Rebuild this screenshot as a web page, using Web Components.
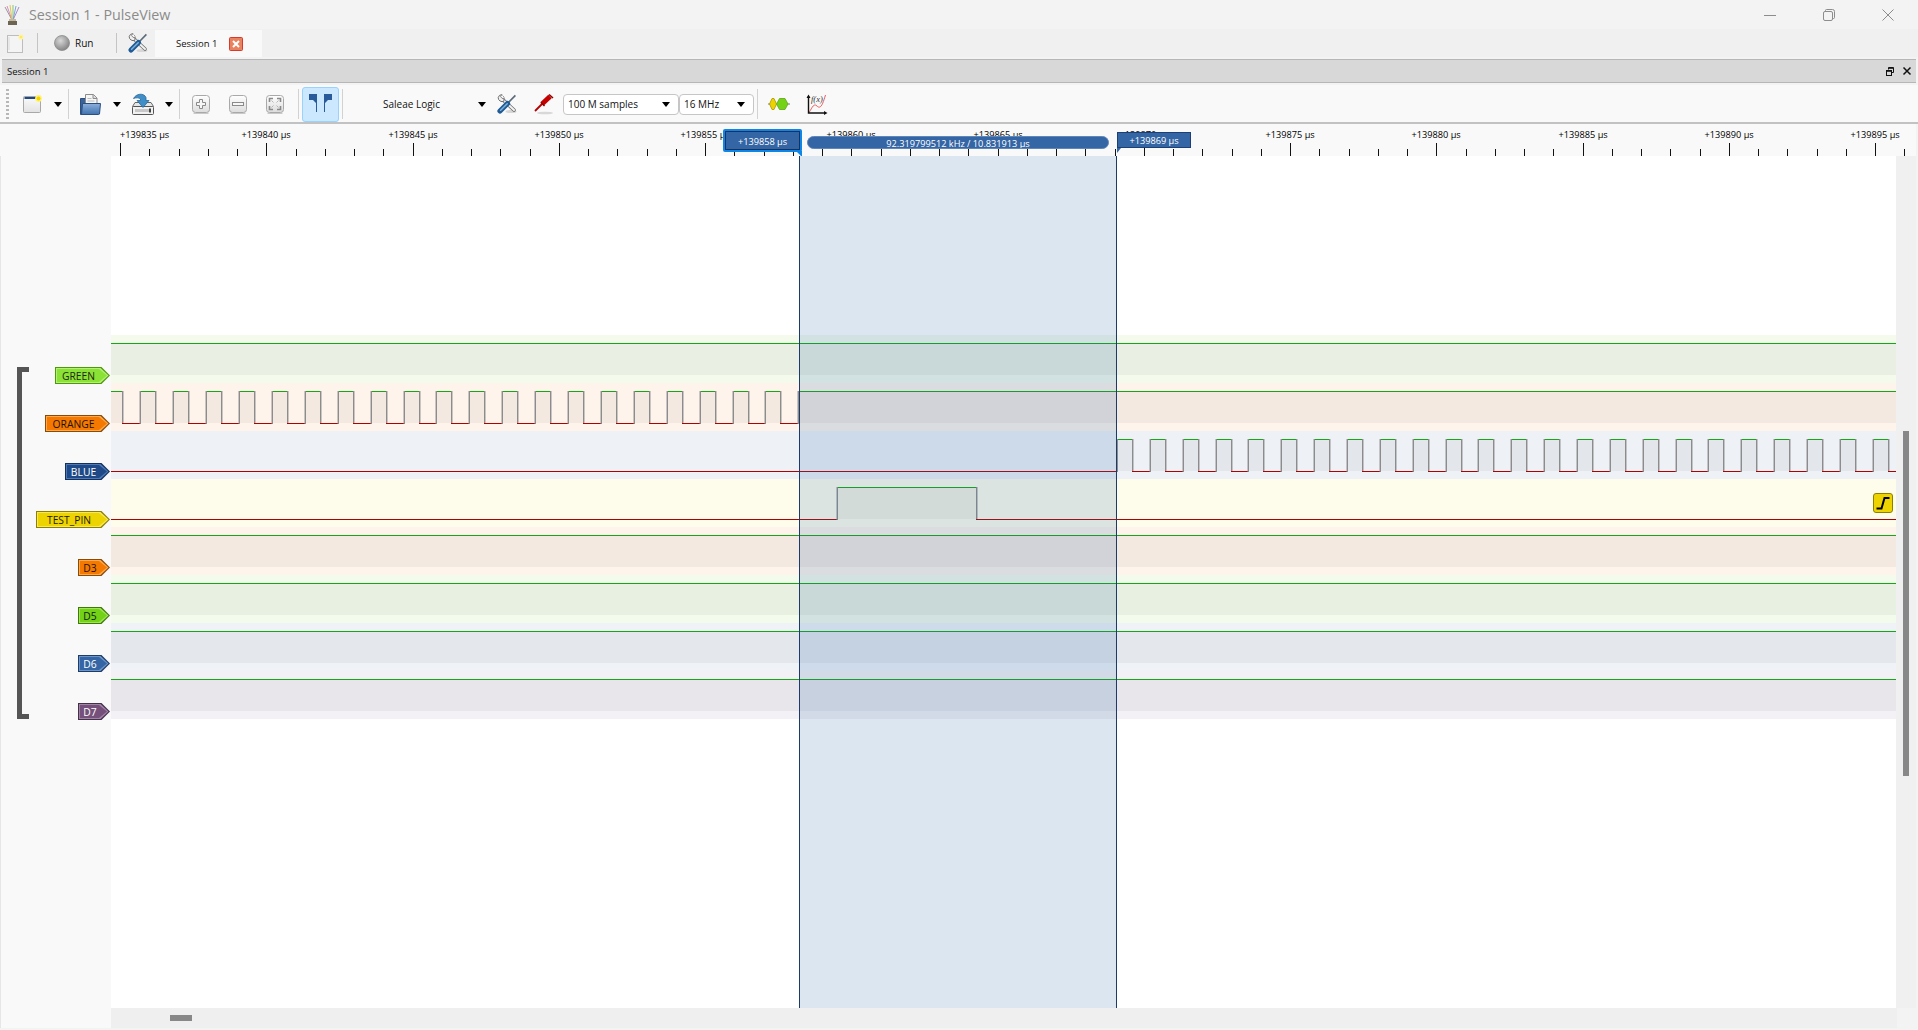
<!DOCTYPE html>
<html>
<head>
<meta charset="utf-8">
<title>Session 1 - PulseView</title>
<style>
  html, body { margin: 0; padding: 0; background: #f3f3f3; overflow: hidden; }
  body { width: 1918px; height: 1030px; font-family: "Open Sans", "Liberation Sans", sans-serif; }
</style>
</head>
<body>
<pv-window>
  <pv-titlebar>Session 1 - PulseView</pv-titlebar>
  <pv-tabbar></pv-tabbar>
  <pv-dockhead>Session 1</pv-dockhead>
  <pv-toolbar></pv-toolbar>
  <pv-ruler></pv-ruler>
  <pv-view>
    <pv-trace tone="lime" wide="55" high="111-1896">GREEN</pv-trace>
    <pv-trace tone="orange" wide="65" pulses="107.4 32.9 15 21" high="798-1896">ORANGE</pv-trace>
    <pv-trace tone="navy" wide="45" pulses="1117 32.857 15 24">BLUE</pv-trace>
    <pv-trace tone="yellow" wide="74" high="837-976">TEST_PIN<pv-trigger slot="marker"></pv-trigger></pv-trace>
    <pv-trace tone="orange" wide="32" high="111-1896">D3</pv-trace>
    <pv-trace tone="green" wide="32" high="111-1896">D5</pv-trace>
    <pv-trace tone="blue" wide="32" high="111-1896">D6</pv-trace>
    <pv-trace tone="plum" wide="32" high="111-1896">D7</pv-trace>
  </pv-view>
  <pv-hscroll></pv-hscroll>
</pv-window>

<script>
const ICONS = {
  logo: `<svg width="17" height="20" viewBox="0 0 17 20"><g fill="none" stroke-width="1"><path d="M8 15L1 2" stroke="#9a9a9a"/><path d="M8 15L3 1" stroke="#d88cc0"/><path d="M8 15L6 0" stroke="#e2c64a"/><path d="M9 15L9 0" stroke="#8fc66b"/><path d="M9 15L12 1" stroke="#7aa6d8"/><path d="M9 15L15 2" stroke="#a58ac8"/></g><rect x="5" y="14" width="7" height="2" fill="#c2b9a0"/><rect x="4" y="16" width="9" height="4" fill="#6d6552"/></svg>`,
  page: `<svg width="17" height="19" viewBox="0 0 17 19"><rect x="0.5" y="1.5" width="15" height="17" fill="#f4f4f4" stroke="#bdbdbd"/><path d="M2 3v13" stroke="#dcdcdc"/><circle cx="14" cy="3" r="2.6" fill="#fff3a0"/><circle cx="14" cy="3" r="1.3" fill="#ffe95a"/></svg>`,
  run: `<svg width="16" height="16" viewBox="0 0 16 16"><defs><radialGradient id="r" cx="40%" cy="35%" r="70%"><stop offset="0" stop-color="#d8d8d8"/><stop offset="1" stop-color="#7f7f7f"/></radialGradient></defs><circle cx="8" cy="8" r="7.5" fill="url(#r)" stroke="#8a8a8a" stroke-width="0.8"/></svg>`,
  tools: `<svg width="20" height="20" viewBox="0 0 20 20"><ellipse cx="14" cy="17.5" rx="5.5" ry="1.6" fill="#d6d6d6"/><path d="M4 4L17 16" stroke="#6f6f6f" stroke-width="3.6" stroke-linecap="round"/><path d="M4 4L17 16" stroke="#f2f2f2" stroke-width="2" stroke-linecap="round"/><path d="M1.2 3.6A4 4 0 0 0 7 7.2L6.8 3 4.6 .6A4 4 0 0 0 1.2 3.6Z" fill="#f0f0f0" stroke="#6f6f6f" stroke-width="1"/><path d="M5 .4L3.6 2.5 5 4.4 7.4 4.4" fill="#f9f9f9" stroke="#6f6f6f" stroke-width=".8"/><path d="M18.4 1.4L11 9" stroke="#5a6a7a" stroke-width="1.6"/><path d="M10.5 9.5L3 17" stroke="#1f5b94" stroke-width="5.2" stroke-linecap="round"/><path d="M10.2 9.8L3.6 16.2" stroke="#7fb0da" stroke-width="1.6" stroke-linecap="round"/></svg>`,
  new: `<svg width="18" height="18" viewBox="0 0 18 18"><defs><linearGradient id="n" x1="0" y1="0" x2="0" y2="1"><stop offset="0" stop-color="#fbfbfb"/><stop offset="1" stop-color="#e2e2e2"/></linearGradient></defs><rect x="0.5" y="1.5" width="17" height="16" rx="1" fill="url(#n)" stroke="#a8a8a8"/><rect x="1.5" y="2" width="14" height="2" fill="#204a87"/><circle cx="15.5" cy="3.5" r="3.4" fill="#fff27a"/><circle cx="15.5" cy="3.5" r="2" fill="#f4d400"/></svg>`,
  open: `<svg width="21" height="21" viewBox="0 0 21 21"><defs><linearGradient id="o" x1="0" y1="0" x2="0" y2="1"><stop offset="0" stop-color="#8db0dc"/><stop offset="1" stop-color="#3f72af"/></linearGradient></defs><path d="M.5 4.5h5v16h-5z" fill="#3a639a" stroke="#2a4f82"/><path d="M5.5 .5h8l3.5 3.5v8h-11.500z" fill="#f6f6f6" stroke="#8c8c8c"/><path d="M13 .8v3.700h4" fill="#ddd" stroke="#8c8c8c"/><path d="M7.500 4.500h4M7.500 7h7" stroke="#bbb"/><path d="M2.500 9.500h18l-1 10.500a1 1 0 0 1-1 .500h-17z" fill="url(#o)" stroke="#2a4f82"/></svg>`,
  save: `<svg width="22" height="22" viewBox="0 0 22 22"><path d="M3 9.500h16l2.500 4h-21z" fill="#e6e6e6" stroke="#666"/><rect x="0.500" y="13.500" width="21" height="8" rx="1" fill="#f2f2f2" stroke="#555"/><rect x="3" y="16" width="14" height="3" fill="#c8c8c8"/><rect x="17" y="15.500" width="2" height="4" fill="#444"/><path d="M1.500 5.500C4 .5 12 -.5 14 4.500V7.500H17L11 14.500 5 7.500H8.500V6C7 4.500 4 4.500 1.500 5.500Z" fill="#3f8ec8" stroke="#2a6a9a" stroke-width=".8"/></svg>`,
  zoomin: `<svg width="18" height="19" viewBox="0 0 18 19"><defs><linearGradient id="z" x1="0" y1="0" x2="0" y2="1"><stop offset="0" stop-color="#fff"/><stop offset="1" stop-color="#dcdcdc"/></linearGradient></defs><rect x="0.500" y="0.500" width="17" height="17" rx="3" fill="url(#z)" stroke="#a9a9a9"/><path d="M1.500 18.500h15" stroke="#c9c9c9"/><path d="M7.500 4.500h3v3h3v3h-3v3h-3v-3h-3v-3h3z" fill="#f6f6f6" stroke="#8a8a8a"/></svg>`,
  zoomout: `<svg width="18" height="19" viewBox="0 0 18 19"><defs><linearGradient id="z" x1="0" y1="0" x2="0" y2="1"><stop offset="0" stop-color="#fff"/><stop offset="1" stop-color="#dcdcdc"/></linearGradient></defs><rect x="0.500" y="0.500" width="17" height="17" rx="3" fill="url(#z)" stroke="#a9a9a9"/><path d="M1.500 18.500h15" stroke="#c9c9c9"/><rect x="3.500" y="7.500" width="11" height="3" fill="#f6f6f6" stroke="#8a8a8a"/></svg>`,
  fit: `<svg width="18" height="19" viewBox="0 0 18 19"><defs><linearGradient id="z" x1="0" y1="0" x2="0" y2="1"><stop offset="0" stop-color="#fff"/><stop offset="1" stop-color="#dcdcdc"/></linearGradient></defs><rect x="0.500" y="0.500" width="17" height="17" rx="3" fill="url(#z)" stroke="#a9a9a9"/><path d="M1.500 18.500h15" stroke="#c9c9c9"/><path d="M3.500 7V3.500H7M11 3.500h3.500V7M14.500 11v3.500H11M7 14.500H3.500V11" fill="none" stroke="#8a8a8a" stroke-width="1.600"/><path d="M5.500 5.500l2 2M12.500 5.500l-2 2M12.500 12.500l-2-2M5.500 12.500l2-2" stroke="#b5b5b5"/></svg>`,
  cursors: `<svg width="24" height="20" viewBox="0 0 24 20"><g fill="#2a5a9a"><path d="M0 0h8v18h-1v-9l-3-3h-4z"/><path d="M24 0h-8v18h1v-9l3-3h4z" transform="translate(-1 0)"/></g></svg>`,
  probe: `<svg width="20" height="22" viewBox="0 0 20 22"><ellipse cx="11" cy="20" rx="8" ry="1.300" fill="#d8d8d8"/><path d="M1 18L8 11" stroke="#b50000" stroke-width="1.800"/><path d="M8 11L16 3.500" stroke="#c40000" stroke-width="5"/><path d="M15 1.500L19 5" stroke="#8f0000" stroke-width="1.600"/><path d="M7 9.500l3.500 3.500" stroke="#8f0000" stroke-width="1.400"/></svg>`,
  decoder: `<svg width="22" height="14" viewBox="0 0 22 14"><path d="M0 7h2M19 7h3" stroke="#777"/><path d="M1.500 7L4 1.500H6L8.500 7 6 12.500H4z" fill="#edd400" stroke="#a89600" stroke-width=".8"/><path d="M8.500 7L11.500 1.500H17L20 7 17 12.500H11.500z" fill="#73d216" stroke="#5fa516" stroke-width=".8"/></svg>`,
  math: `<svg width="22" height="21" viewBox="0 0 22 21"><path d="M2.500 19C5 17 7 8 11 12S17 9 19.500 1" fill="none" stroke="#ef5a5a" stroke-width="1"/><path d="M2.500 2V19H20" fill="none" stroke="#111" stroke-width="1.400"/><path d="M0.500 4L2.500 .5 4.500 4zM18 17l3.500 2-3.500 2z" fill="#111"/><text x="5" y="7.500" font-family="Liberation Serif, serif" font-style="italic" font-size="8.500" fill="#333">f(x)</text></svg>`,
  min: `<svg width="12" height="12" viewBox="0 0 12 12"><path d="M0 6.500h12" stroke="#8c8c8c"/></svg>`,
  max: `<svg width="12" height="12" viewBox="0 0 12 12"><rect x="0.500" y="2.500" width="9" height="9" rx="1.500" fill="none" stroke="#8c8c8c"/><path d="M2.500 2.500V1.500a1 1 0 0 1 1-1h6a2 2 0 0 1 2 2v6a1 1 0 0 1-1 1h-1" fill="none" stroke="#8c8c8c"/></svg>`,
  close: `<svg width="12" height="12" viewBox="0 0 12 12"><path d="M.5 .5l11 11M11.500 .5l-11 11" stroke="#8c8c8c"/></svg>`,
  tabclose: `<svg width="14" height="14" viewBox="0 0 14 14"><rect x="0.500" y="0.500" width="13" height="13" rx="1" fill="#e8825f" stroke="#d8392b"/><path d="M4 4l6 6M10 4l-6 6" stroke="#fff" stroke-width="2"/></svg>`,
  float: `<svg width="8" height="9" viewBox="0 0 8 9"><path d="M2.500 2.500V.5h5v5h-2" fill="none" stroke="#111"/><path d="M2.500 1.300h5" stroke="#111"/><rect x="0.500" y="3.500" width="5" height="5" fill="none" stroke="#111"/><path d="M.5 4.300h5" stroke="#111"/></svg>`,
  x: `<svg width="8" height="8" viewBox="0 0 8 8"><path d="M.5 .5l7 7M7.500 .5l-7 7" stroke="#111" stroke-width="1.500"/></svg>`
};

class PvIcon extends HTMLElement {
  connectedCallback() {
    if (this.shadowRoot) return;
    const root = this.attachShadow({mode: 'open'});
    root.innerHTML = `<style>:host { display: block; flex: none; line-height: 0; } svg { display: block; overflow: visible; }</style>${ICONS[this.getAttribute('name')]}`;
  }
}

class PvWindow extends HTMLElement {
  constructor() {
    super();
    this.attachShadow({mode: 'open'}).innerHTML = `
      <style>
        :host { display: flex; flex-direction: column; width: 1918px; height: 1030px; overflow: hidden; background: #f3f3f3; }
      </style>
      <slot></slot>`;
  }
}

class PvTitlebar extends HTMLElement {
  constructor() {
    super();
    this.attachShadow({mode: 'open'}).innerHTML = `
      <style>
        :host { display: flex; align-items: center; height: 29px; flex: none; background: #f3f3f3; color: #8b8b8b; font-size: 14.300px; }
        pv-icon { margin: 0 8px 0 4px; }
        .name { flex: 1; padding-bottom: 1px; }
        .ctl { margin: 0 47px 0 0; }
        .ctl:last-child { margin-right: 24px; }
      </style>
      <pv-icon name="logo"></pv-icon>
      <span class="name"><slot></slot></span>
      <pv-icon class="ctl" name="min"></pv-icon>
      <pv-icon class="ctl" name="max"></pv-icon>
      <pv-icon class="ctl" name="close"></pv-icon>`;
  }
}

class PvTabbar extends HTMLElement {
  constructor() {
    super();
    this.attachShadow({mode: 'open'}).innerHTML = `
      <style>
        :host { display: flex; align-items: center; height: 28px; flex: none; background: #f0f0f0; font-size: 10px; color: #111; }
        .sep { width: 1px; height: 20px; background: #c4c4c4; }
        .tab { display: flex; align-items: center; align-self: stretch; width: 107px; margin: 1px 0 0 7px; background: #f9f9f9; box-sizing: border-box; padding-left: 21px; font-size: 9.500px; }
        .tab pv-icon { margin-left: 12px; }
      </style>
      <pv-icon name="page" style="margin-left:7px"></pv-icon>
      <div class="sep" style="margin-left:13px"></div>
      <pv-icon name="run" style="margin-left:16px"></pv-icon>
      <span style="margin-left:5px;width:41px">Run</span>
      <div class="sep"></div>
      <pv-icon name="tools" style="margin-left:11px"></pv-icon>
      <div class="tab"><span>Session 1</span><pv-icon name="tabclose"></pv-icon></div>`;
  }
}

class PvDockhead extends HTMLElement {
  constructor() {
    super();
    this.attachShadow({mode: 'open'}).innerHTML = `
      <style>
        :host { display: flex; align-items: center; height: 22px; flex: none; margin: 2px 2px 2px 2px; padding: 0 5px; background: #d8d8d8; border-top: 1px solid #b6b6b6; border-bottom: 1px solid #b6b6b6; font-size: 9.500px; color: #111; }
        span { flex: 1; }
        pv-icon { margin-left: 9px; }
      </style>
      <span><slot></slot></span>
      <pv-icon name="float"></pv-icon>
      <pv-icon name="x"></pv-icon>`;
  }
}

class PvCombo extends HTMLElement {
  constructor() {
    super();
    this.attachShadow({mode: 'open'}).innerHTML = `
      <style>
        :host { display: flex; align-items: center; flex: none; box-sizing: border-box; height: 21px; padding: 0 8px 0 4px; background: #fff; border: 1px solid #c6c6c6; border-radius: 4px; font-size: 10px; color: #111; }
        span { flex: 1; }
        i { width: 0; height: 0; border: 4.500px solid transparent; border-top: 5px solid #000; border-bottom: 0; }
      </style>
      <span><slot></slot></span><i></i>`;
  }
}

class PvToolbar extends HTMLElement {
  constructor() {
    super();
    this.attachShadow({mode: 'open'}).innerHTML = `
      <style>
        :host { display: flex; align-items: center; height: 36px; padding-top: 1px; flex: none; background: #f9f9f9; border-bottom: 2px solid #c2c2c2; font-size: 10px; color: #111; }
        .grip { width: 3px; height: 30px; margin-left: 6px; background: repeating-linear-gradient(#b8b8b8 0 2px, transparent 2px 4px); }
        .arr { flex: none; width: 0; height: 0; border: 4.500px solid transparent; border-top: 5px solid #000; border-bottom: 0; }
        .sep { width: 1px; height: 30px; background: #d2d2d2; }
        .on { display: flex; align-items: center; justify-content: center; box-sizing: border-box; width: 37px; height: 35px; background: #cce8ff; border: 1px solid #99d1ff; border-radius: 3px; }
        .dev { width: 95px; flex: none; }
      </style>
      <div class="grip"></div>
      <pv-icon name="new" style="margin-left:14px"></pv-icon>
      <i class="arr" style="margin-left:13px"></i>
      <div class="sep" style="margin-left:6px"></div>
      <pv-icon name="open" style="margin-left:11px"></pv-icon>
      <i class="arr" style="margin-left:12px"></i>
      <pv-icon name="save" style="margin-left:11px"></pv-icon>
      <i class="arr" style="margin-left:11px"></i>
      <div class="sep" style="margin-left:6px"></div>
      <pv-icon name="zoomin" style="margin-left:12px"></pv-icon>
      <pv-icon name="zoomout" style="margin-left:19px"></pv-icon>
      <pv-icon name="fit" style="margin-left:19px"></pv-icon>
      <div class="sep" style="margin-left:14px"></div>
      <div class="on" style="margin-left:3px"><pv-icon name="cursors"></pv-icon></div>
      <div class="sep" style="margin-left:3px"></div>
      <span class="dev" style="margin-left:40px">Saleae Logic</span>
      <i class="arr"></i>
      <pv-icon name="tools" style="margin-left:11px"></pv-icon>
      <pv-icon name="probe" style="margin-left:17px"></pv-icon>
      <pv-combo style="margin-left:9px;width:116px">100 M samples</pv-combo>
      <pv-combo style="width:75px">16 MHz</pv-combo>
      <div class="sep" style="margin-left:3px"></div>
      <pv-icon name="decoder" style="margin-left:10px"></pv-icon>
      <pv-icon name="math" style="margin-left:16px"></pv-icon>`;
  }
}

class PvFlag extends HTMLElement {
  constructor() {
    super();
    this.attachShadow({mode: 'open'}).innerHTML = `
      <style>
        :host { position: absolute; display: flex; align-items: center; justify-content: center; box-sizing: border-box; background: #3465a4; border: 1px solid #1d3f73; color: #fff; font-size: 9.200px; white-space: nowrap; }
        :host([kind="active"]) { left: 723px; top: 5px; width: 79px; height: 23px; padding-top: 1px; border: 2px solid #0e86e8; box-shadow: inset 0 0 0 1px #14305c; border-radius: 2px; }
        :host([kind="end"]) { left: 1117px; top: 8px; width: 74px; height: 16px; padding-top: 1px; }
        :host([kind="pair"]) { left: 807px; top: 12px; width: 302px; height: 13px; border-radius: 7px; border-color: #5f86bb; padding-top: 3px; overflow: hidden; line-height: 10px; z-index: 1; }
        .tail { position: absolute; width: 0; height: 0; }
        :host([kind="active"]) .tail { right: -2px; top: calc(100% + 1px); border-top: 6px solid #0e86e8; border-left: 6px solid transparent; }
        :host([kind="end"]) .tail { left: -1px; top: calc(100% + 1px); border-top: 5px solid #3465a4; border-right: 4px solid transparent; }
        :host([kind="pair"]) .tail { display: none; }
      </style>
      <slot></slot><div class="tail"></div>`;
  }
}

class PvRuler extends HTMLElement {
  constructor() {
    super();
    let ticks = '';
    let labels = '';
    for (let k = 0; k < 62; k++) {
      const x = Math.round(120 + 29.25 * k);
      const major = k % 5 === 0;
      ticks += `<rect x="${x}" y="${major ? 19 : 25}" width="1" height="${major ? 13 : 7}" fill="#111"/>`;
      if (major) {
        const left = k === 0 ? 120 : x - 24.500;
        labels += `<span class="lb" style="left:${left}px">+${139835 + k}&nbsp;µs</span>`;
      }
    }
    this.attachShadow({mode: 'open'}).innerHTML = `
      <style>
        :host { display: block; position: relative; height: 32px; flex: none; margin-right: 2px; background: #f9f9f9; overflow: hidden; }
        svg { position: absolute; left: 0; top: 0; }
        .lb { position: absolute; top: 4px; font-size: 9.200px; line-height: 14px; color: #000; white-space: nowrap; }
      </style>
      ${labels}
      <svg width="1916" height="32" shape-rendering="crispEdges">${ticks}</svg>
      <pv-flag kind="active">+139858 µs</pv-flag>
      <pv-flag kind="pair">92.319799512 kHz / 10.831913 µs</pv-flag>
      <pv-flag kind="end">+139869 µs</pv-flag>`;
  }
}

class PvView extends HTMLElement {
  constructor() {
    super();
    this.attachShadow({mode: 'open'}).innerHTML = `
      <style>
        :host { display: grid; grid-template-columns: 1895px 20px; height: 852px; flex: none; border-left: 1px solid #e6e6e6; }
        .traces { position: relative; padding-top: 179px; background: linear-gradient(90deg, #f9f9f9 110px, #fff 110px); overflow: hidden; }
        .bracket { position: absolute; left: 16px; top: 211px; box-sizing: border-box; width: 12px; height: 352px; border: 5px solid #555; border-right: 0; }
        .cursors { position: absolute; left: 798px; top: 0; bottom: 0; width: 318px; box-sizing: border-box; background: rgba(40, 105, 170, .165); border-left: 1px solid #1d3a68; border-right: 1px solid #1d3a68; }
        .vbar { background: #f0f0f0; padding: 275px 0 0 7px; }
        .thumb { width: 6px; height: 345px; background: #888; }
      </style>
      <div class="traces">
        <slot></slot>
        <div class="bracket"></div>
        <div class="cursors"></div>
      </div>
      <div class="vbar"><div class="thumb"></div></div>`;
  }
}

const TONES = {
  lime:   {fill: '#8ae234', edge: '#4e9a06', glow: '#b4ee7c', ink: '#1c2a10', bg: '#f4fbed'},
  orange: {fill: '#f57900', edge: '#8a4a08', glow: '#fca94a', ink: '#1e1206', bg: '#fef4eb'},
  navy:   {fill: '#204a87', edge: '#14305c', glow: '#4d7ab6', ink: '#fff',    bg: '#eef1f6'},
  yellow: {fill: '#edd400', edge: '#8f7f00', glow: '#f6e85c', ink: '#1e1a00', bg: '#fefdeb'},
  green:  {fill: '#73d216', edge: '#3f7a05', glow: '#a0e35c', ink: '#10200a', bg: '#f3fbec'},
  blue:   {fill: '#3465a4', edge: '#1d3c66', glow: '#6d95c9', ink: '#fff',    bg: '#eff2f7'},
  plum:   {fill: '#75507b', edge: '#45304a', glow: '#a283a8', ink: '#fff',    bg: '#f3f1f5'}
};

class PvTrace extends HTMLElement {
  connectedCallback() {
    if (this.shadowRoot) return;
    const tone = TONES[this.getAttribute('tone')];
    const spans = [];
    const pulses = this.getAttribute('pulses');
    if (pulses) {
      const [start, period, width, count] = pulses.split(' ').map(Number);
      for (let k = 0; k < count; k++) {
        spans.push([start + period * k, start + period * k + width]);
      }
    }
    const high = this.getAttribute('high');
    if (high) spans.push(high.split('-').map(Number));

    // x values come in page pixels, the wave cell starts at 111
    let wave = '';
    let last = 0;
    spans.forEach(([a, b]) => {
      const from = Math.round(a) - 111;
      const to = Math.round(b) - 111;
      const on = Math.max(from, 0);
      if (on > last) wave += `<rect x="${last}" y="40" width="${on - last}" height="1" fill="#b20000"/>`;
      wave += `<rect x="${on}" y="8" width="${to - on}" height="32" fill="rgba(50,50,50,.055)"/>`;
      wave += `<rect x="${on}" y="8" width="${to - on}" height="1" fill="#14a814"/>`;
      if (from > 0) wave += `<rect x="${from}" y="8" width="1" height="33" fill="#8c8c8c"/><rect x="${from - 1}" y="8" width="1" height="33" fill="rgba(140,140,140,.45)"/>`;
      if (to < 1785) wave += `<rect x="${to}" y="8" width="1" height="33" fill="#8c8c8c"/><rect x="${to + 1}" y="8" width="1" height="33" fill="rgba(140,140,140,.45)"/>`;
      last = to;
    });
    if (last < 1785) wave += `<rect x="${last}" y="40" width="${1785 - last}" height="1" fill="#b20000"/>`;

    this.attachShadow({mode: 'open'}).innerHTML = `
      <style>
        :host { display: grid; grid-template-columns: 110px 1785px; height: 48px; }
        .head { display: flex; justify-content: flex-end; align-items: flex-end; padding-right: 1px; }
        .tag { position: relative; display: flex; align-items: center; justify-content: center; box-sizing: border-box; width: ${this.getAttribute('wide')}px; height: 17px; margin-bottom: -1px; padding: 1px 8px 0 0; color: ${tone.ink}; font-size: 10.300px; line-height: 16px; background: ${tone.edge}; clip-path: polygon(0 0, calc(100% - 8.500px) 0, 100% 50%, calc(100% - 8.500px) 100%, 0 100%); }
        .tag::before, .tag::after { content: ""; position: absolute; clip-path: polygon(0 0, calc(100% - 8px) 0, 100% 50%, calc(100% - 8px) 100%, 0 100%); }
        .tag::before { inset: 1px 1.500px 1px 1px; background: ${tone.glow}; }
        .tag::after { inset: 2px 3px 2px 2px; background: ${tone.fill}; }
        .tag span { position: relative; z-index: 1; }
        .wave { position: relative; background: ${tone.bg}; }
        svg { display: block; }
      </style>
      <div class="head"><div class="tag"><span><slot></slot></span></div></div>
      <div class="wave">
        <svg width="1785" height="48" shape-rendering="crispEdges">${wave}</svg>
        <slot name="marker"></slot>
      </div>`;
  }
}

class PvTrigger extends HTMLElement {
  constructor() {
    super();
    this.attachShadow({mode: 'open'}).innerHTML = `
      <style>
        :host { position: absolute; right: 3px; top: 14px; box-sizing: border-box; width: 20px; height: 20px; background: #edd400; border: 1px solid #8f7f00; border-radius: 3px; }
        svg { display: block; }
      </style>
      <svg width="18" height="18" viewBox="0 0 18 18"><path d="M2.500 14.500h5l3-10.500h5" fill="none" stroke="#000" stroke-width="2"/></svg>`;
  }
}

class PvHscroll extends HTMLElement {
  constructor() {
    super();
    this.attachShadow({mode: 'open'}).innerHTML = `
      <style>
        :host { display: block; height: 20px; flex: none; background: linear-gradient(90deg, #f9f9f9 110px, #efefef 110px, #efefef 1896px, #f3f3f3 1896px); border-left: 1px solid #e6e6e6; padding: 7px 0 0 169px; box-sizing: border-box; }
        div { width: 22px; height: 6px; background: #888; }
      </style>
      <div></div>`;
  }
}

customElements.define('pv-icon', PvIcon);
customElements.define('pv-window', PvWindow);
customElements.define('pv-titlebar', PvTitlebar);
customElements.define('pv-tabbar', PvTabbar);
customElements.define('pv-dockhead', PvDockhead);
customElements.define('pv-combo', PvCombo);
customElements.define('pv-toolbar', PvToolbar);
customElements.define('pv-flag', PvFlag);
customElements.define('pv-ruler', PvRuler);
customElements.define('pv-view', PvView);
customElements.define('pv-trace', PvTrace);
customElements.define('pv-trigger', PvTrigger);
customElements.define('pv-hscroll', PvHscroll);
</script>
</body>
</html>
